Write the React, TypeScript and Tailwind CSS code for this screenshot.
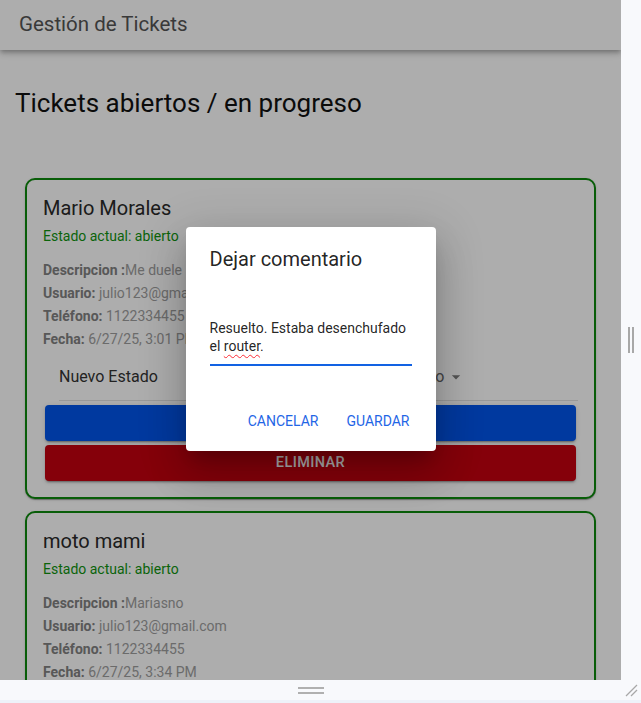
import React from "react";

interface Ticket {
  nombre: string;
  estado: string;
  descripcion: string;
  usuario: string;
  telefono: string;
  fecha: string;
}

const tickets: Ticket[] = [
  {
    nombre: "Mario Morales",
    estado: "abierto",
    descripcion: "Me duele",
    usuario: "julio123@gmail.com",
    telefono: "1122334455",
    fecha: "6/27/25, 3:01 PM",
  },
  {
    nombre: "moto mami",
    estado: "abierto",
    descripcion: "Mariasno",
    usuario: "julio123@gmail.com",
    telefono: "1122334455",
    fecha: "6/27/25, 3:34 PM",
  },
];

function ArrowDropDown() {
  return (
    <svg width="20" height="20" viewBox="0 0 24 24" className="ml-[2px] fill-[#7d7d7d]">
      <path d="M7 10l5 5 5-5z" />
    </svg>
  );
}

function TicketCard({ t }: { t: Ticket }) {
  return (
    <div className="mx-[10px] rounded-[10px] border-2 border-[#0d8a0d] bg-white p-4 shadow-[0_2px_1px_-1px_rgba(0,0,0,0.2),0_1px_1px_0_rgba(0,0,0,0.14),0_1px_3px_0_rgba(0,0,0,0.12)]">
      <div className="text-[20px] leading-[24px] text-[#2a2a2a]">{t.nombre}</div>
      <div className="mt-[6px] text-[14px] leading-[20px] text-[#10940f]">
        Estado actual: {t.estado}
      </div>
      <div className="mt-[13px] text-[14px] leading-[23px] text-[#9e9e9e]">
        <p>
          <strong className="text-[#828282]">Descripcion :</strong>
          {t.descripcion}
        </p>
        <p>
          <strong className="text-[#828282]">Usuario:</strong> {t.usuario}
        </p>
        <p>
          <strong className="text-[#828282]">Teléfono:</strong> {t.telefono}
        </p>
        <p>
          <strong className="text-[#828282]">Fecha:</strong> {t.fecha}
        </p>
      </div>
      <div className="ml-4 mt-[14px] flex items-center border-b border-[#e0e0e0] pb-[11px] text-[16px] leading-[24px] text-[#333]">
        <span className="w-[329px]">Nuevo Estado</span>
        <span className="text-[#666]">Cerrado</span>
        <ArrowDropDown />
      </div>
      <button className="mx-[2px] mt-[4px] flex h-[36px] w-[calc(100%-4px)] items-center justify-center rounded-[4px] bg-[#0055ea] text-[14.5px] font-medium uppercase tracking-[0.4px] text-white shadow-[0_3px_1px_-2px_rgba(0,0,0,0.2),0_2px_2px_0_rgba(0,0,0,0.14),0_1px_5px_0_rgba(0,0,0,0.12)]">
        Actualizar
      </button>
      <button className="mx-[2px] mt-[4px] flex h-[36px] w-[calc(100%-4px)] items-center justify-center rounded-[4px] bg-[#c40010] text-[14.5px] font-medium uppercase tracking-[0.4px] text-white shadow-[0_3px_1px_-2px_rgba(0,0,0,0.2),0_2px_2px_0_rgba(0,0,0,0.14),0_1px_5px_0_rgba(0,0,0,0.12)]">
        Eliminar
      </button>
    </div>
  );
}

function CommentDialog() {
  return (
    <div className="-mt-[3px] w-[250px] rounded-[4px] bg-white shadow-[0_11px_15px_-7px_rgba(0,0,0,0.2),0_24px_38px_3px_rgba(0,0,0,0.14),0_9px_46px_8px_rgba(0,0,0,0.12)]">
      <div className="px-6 pt-4 text-[20px] leading-[32px] text-[rgba(0,0,0,0.87)]">
        Dejar comentario
      </div>
      <div className="mx-6 mt-[44px] border-b-2 border-[#1262e3] pb-[9px] text-[14px] leading-[18px] text-[rgba(0,0,0,0.87)]">
        Resuelto. Estaba desenchufado el{" "}
        <span className="underline decoration-red-500 decoration-wavy decoration-1 underline-offset-[3px]">
          router
        </span>
        .
      </div>
      <div className="mt-[38px] flex justify-end gap-[12px] pb-[11px] pr-[18px]">
        <button className="h-9 px-2 text-[14px] font-normal uppercase text-[#1f66e6]">
          Cancelar
        </button>
        <button className="h-9 px-2 text-[14px] font-normal uppercase text-[#1f66e6]">
          Guardar
        </button>
      </div>
    </div>
  );
}

export default function App() {
  return (
    <div className="flex h-[703px] w-[641px] flex-col overflow-hidden bg-[#f8f9fc] font-['Roboto',sans-serif]">
      <div className="flex h-[680px]">
        <div className="relative h-[680px] w-[621px] overflow-hidden bg-white">
          <header className="relative z-10 flex h-[50px] items-center bg-white px-[19px] text-[20.5px] text-[#555] shadow-[0_2px_4px_-1px_rgba(0,0,0,0.2),0_4px_5px_0_rgba(0,0,0,0.14),0_1px_10px_0_rgba(0,0,0,0.12)]">
            <span className="-mt-[2px]">Gestión de Tickets</span>
          </header>
          <main className="px-[15px]">
            <h1 className="mt-[36px] text-[26px] leading-[34px] text-[#111]">
              Tickets abiertos / en progreso
            </h1>
            <div className="mt-[58px] flex flex-col gap-[12px]">
              {tickets.map((t) => (
                <TicketCard key={t.nombre} t={t} />
              ))}
            </div>
          </main>
          <div className="absolute inset-0 z-20 flex items-center justify-center bg-[rgba(0,0,0,0.32)]">
            <CommentDialog />
          </div>
        </div>
        <div className="flex flex-1 items-center justify-center">
          <div className="flex gap-[2px]">
            <div className="h-[26px] w-[2px] bg-[#a8a8a8]" />
            <div className="h-[26px] w-[2px] bg-[#a8a8a8]" />
          </div>
        </div>
      </div>
      <div className="flex h-[20px]">
        <div className="flex w-[621px] flex-col items-center justify-center gap-[3px]">
          <div className="h-[2px] w-[26px] bg-[#b0b0b0]" />
          <div className="h-[2px] w-[26px] bg-[#b0b0b0]" />
        </div>
        <div className="flex flex-1 items-center justify-center">
          <svg width="14" height="14" viewBox="0 0 14 14" className="stroke-[#a8a8a8]">
            <line x1="2" y1="13" x2="13" y2="2" strokeWidth="1.3" />
            <line x1="7" y1="13" x2="13" y2="7" strokeWidth="1.3" />
          </svg>
        </div>
      </div>
      <div className="h-[3px] bg-[#eef2f9]" />
    </div>
  );
}
